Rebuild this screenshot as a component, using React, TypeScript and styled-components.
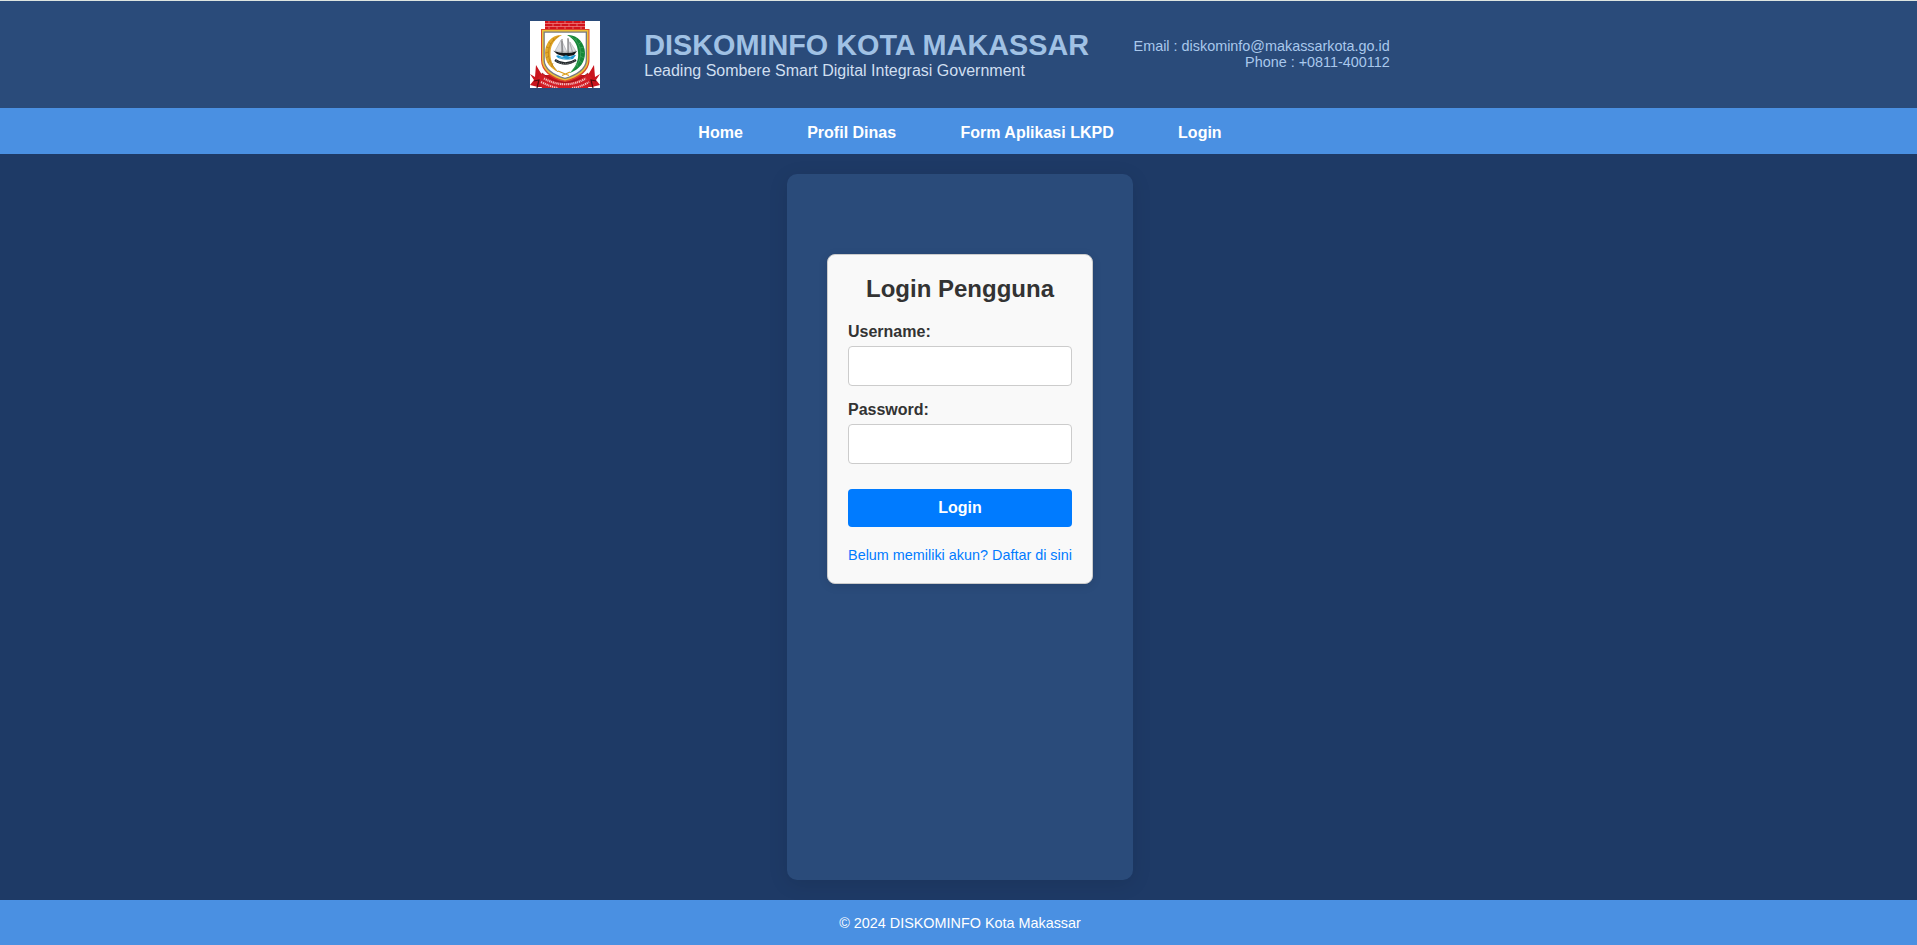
import React from "react";
import styled, { createGlobalStyle } from "styled-components";

const GlobalStyle = createGlobalStyle`
  * { box-sizing: border-box; }
  body {
    margin: 0;
    background: #1e3a66;
    font-family: Arial, "Liberation Sans", sans-serif;
    color: #fff;
  }
`;

const Page = styled.div`
  display: flex;
  flex-direction: column;
  height: 945px;
  border-top: 1px solid #dde5e0;
`;

const Header = styled.header`
  display: flex;
  justify-content: center;
  align-items: center;
  gap: 44.6px;
  height: 107px;
  padding-left: 2.4px;
  background: #2a4b7a;
`;

const Emblem = styled.svg`
  display: block;
  width: 70px;
  height: 67px;
  background: #fff;
`;

const Brand = styled.div`
  padding-bottom: 1px;
`;

const Title = styled.h1`
  margin: 0;
  font-size: 28.8px;
  line-height: 33px;
  color: #a0c1e4;
`;

const Tagline = styled.p`
  margin: 0;
  font-size: 16px;
  line-height: 18px;
  color: #d0dff0;
`;

const Contact = styled.div`
  padding-bottom: 2px;
  font-size: 14.4px;
  line-height: 16px;
  text-align: right;
  color: #a9c8ec;
`;

const Nav = styled.nav`
  display: flex;
  justify-content: center;
  gap: 64.4px;
  height: 46px;
  padding-left: 3px;
  background: #4a90e2;
`;

const NavLink = styled.a`
  font-size: 16px;
  font-weight: bold;
  line-height: 50px;
  color: #fff;
  text-decoration: none;
`;

const Main = styled.main`
  flex: 1;
  display: flex;
  justify-content: center;
  padding: 20px 0 20px 3px;
`;

const Panel = styled.section`
  width: 346px;
  padding: 80px 40px;
  border-radius: 10px;
  background: #2a4b7a;
  box-shadow: 0 4px 20px rgba(0, 0, 0, 0.1);
`;

const LoginForm = styled.form`
  display: flex;
  flex-direction: column;
  height: 330px;
  padding: 20px;
  border: 1px solid #ccc;
  border-radius: 8px;
  background: #f9f9f9;
  box-shadow: 0 2px 10px rgba(0, 0, 0, 0.1);
  color: #333;
`;

const FormTitle = styled.h2`
  margin: 0 0 21px;
  font-size: 24px;
  line-height: 27px;
  text-align: center;
`;

const Label = styled.label`
  margin-bottom: 5px;
  font-size: 16px;
  font-weight: bold;
  line-height: 18px;
`;

const Input = styled.input`
  width: 100%;
  height: 40px;
  margin: 0 0 15px;
  padding: 10px;
  border: 1px solid #ccc;
  border-radius: 4px;
  background: #fff;
  font-size: 16px;
`;

const SubmitButton = styled.button`
  height: 38px;
  margin: 10px 0 20px;
  padding: 0;
  border: none;
  border-radius: 4px;
  background: #007bff;
  color: #fff;
  font: bold 16px Arial, "Liberation Sans", sans-serif;
`;

const RegisterLink = styled.a`
  font-size: 14.4px;
  line-height: 16px;
  text-align: center;
  white-space: nowrap;
  color: #007bff;
  text-decoration: none;
`;

const Footer = styled.footer`
  height: 45px;
  padding-left: 3px;
  background: #4a90e2;
  font-size: 14.4px;
  line-height: 46px;
  text-align: center;
`;

function CityEmblem() {
  return (
    <Emblem viewBox="0 0 70 67" role="img" aria-label="Kota Makassar">
      <rect x="15" y="0" width="40" height="9" fill="#d3131b" />
      <path
        d="M15 2.5H55M15 5.5H55M19 0V2.5M27 0V2.5M35 0V2.5M43 0V2.5M51 0V2.5M23 2.5V5.5M31 2.5V5.5M39 2.5V5.5M47 2.5V5.5M19 5.5V8M27 5.5V8M35 5.5V8M43 5.5V8M51 5.5V8"
        stroke="#f08c8c"
        strokeWidth=".7"
      />
      <path d="M0 53L5 56L6 44L12 54L58 54L64 44L65 56L70 53L66 59L70 64L62 66H8L0 64L4 59Z" fill="#c9141d" />
      <path d="M11 8H59.5V39C59.5 50 49 58 35 61C21 58 11 50 11 39Z" fill="#d84a2b" />
      <path d="M12 9H58.5V39C58.5 49 48 56.5 35 59.5C22 56.5 12 49 12 39Z" fill="#edc13a" />
      <path d="M13.5 10.5H57V39C57 48 47 55 35 58C23 55 13.5 48 13.5 39Z" fill="#777a80" />
      <path d="M14.8 11.8H55.7V39C55.7 47.2 46 53.8 35 56.7C24 53.8 14.8 47.2 14.8 39Z" fill="#fff" />
      <path d="M32 14C22 13 15 22 15 32C15 41 20 47 28 51C22 44 20 38 20.5 31C21 23 25 18 32 14Z" fill="#e2a829" />
      <path d="M29 15C19 20 15 33 22 44L28 51M23 17L24 20M18.5 21L21 23M16 26L19 27M15.5 32L18.5 31M16 37L19 35M18 42L20.5 39M21.5 46L23 42" fill="none" stroke="#b97c12" strokeWidth=".7" />
      <path d="M37 14C47 13 55 22 55 32C55 41 50 48 40 52C46 45 49 39 48 31C47.5 23 44 18 37 14Z" fill="#158638" />
      <path d="M40 15C50 20 54 33 47 44L40 52M46 17L46 20M51 21L49 23M54 26L50 27M54.5 32L51 31M54 37L50 35M51.5 42L49 39M48 46L46 42" fill="none" stroke="#4dad68" strokeWidth=".6" />
      <path d="M40 51L32 54.5M28 50L39 54.5" stroke="#d99b16" strokeWidth="1.3" />
      <path d="M31 19L25 30L33 31ZM32 20L37 31H33ZM38 18L43 31H38ZM40 21L46 30L42 31Z" fill="#dcdde0" stroke="#85888d" strokeWidth=".4" />
      <path d="M32 18V32M38 17V32" stroke="#555" strokeWidth=".8" />
      <path d="M23 29.5C27 32 41 33 47 30L44 34C39 36 30 35 27 33Z" fill="#15191b" />
      <path d="M26 35Q28 33.5 30 35T34 35T38 35T42 35T46 34L43 38Q35 40 28 37Z" fill="#2299d1" />
      <path d="M29 37Q32 36 35 38T41 37" fill="none" stroke="#8fd2ec" strokeWidth=".6" />
      <path d="M25 39Q35 46 46 39" fill="none" stroke="#22272a" strokeWidth="2.4" />
      <path d="M26 39.5Q35 46 45 39.5" fill="none" stroke="#b8bbbc" strokeWidth=".6" strokeDasharray="1 .9" />
      <path d="M8 57L12 52Q23 61.5 35 61.5T58 52L62 57L58 67H12Z" fill="#d11c24" />
      <path d="M12 52Q23 61.5 35 61.5T58 52" fill="none" stroke="#8c1118" strokeWidth=".7" />
      <path d="M4 60L9 59L7 67M66 60L61 59L63 67" fill="none" stroke="#550b0e" strokeWidth="1.2" />
      <path d="M14 57.5Q35 69 56 57.5" fill="none" stroke="#f4c2c2" strokeWidth="2.2" strokeDasharray="1 .8 1.3 .7" />
      <path d="M11 61Q21 66 28 67M42 67Q51 66 59 61" fill="none" stroke="#f4c2c2" strokeWidth="2" strokeDasharray="1.1 .8 1.3 .7" />
    </Emblem>
  );
}

export default function App() {
  return (
    <>
      <GlobalStyle />
      <Page>
        <Header>
          <CityEmblem />
          <Brand>
            <Title>DISKOMINFO KOTA MAKASSAR</Title>
            <Tagline>Leading Sombere Smart Digital Integrasi Government</Tagline>
          </Brand>
          <Contact>
            <div>Email : diskominfo@makassarkota.go.id</div>
            <div>Phone : +0811-400112</div>
          </Contact>
        </Header>
        <Nav>
          {["Home", "Profil Dinas", "Form Aplikasi LKPD", "Login"].map((item) => (
            <NavLink key={item} href="#">{item}</NavLink>
          ))}
        </Nav>
        <Main>
          <Panel>
            <LoginForm>
              <FormTitle>Login Pengguna</FormTitle>
              <Label htmlFor="username">Username:</Label>
              <Input id="username" type="text" />
              <Label htmlFor="password">Password:</Label>
              <Input id="password" type="password" />
              <SubmitButton type="button">Login</SubmitButton>
              <RegisterLink href="#">Belum memiliki akun? Daftar di sini</RegisterLink>
            </LoginForm>
          </Panel>
        </Main>
        <Footer>© 2024 DISKOMINFO Kota Makassar</Footer>
      </Page>
    </>
  );
}
